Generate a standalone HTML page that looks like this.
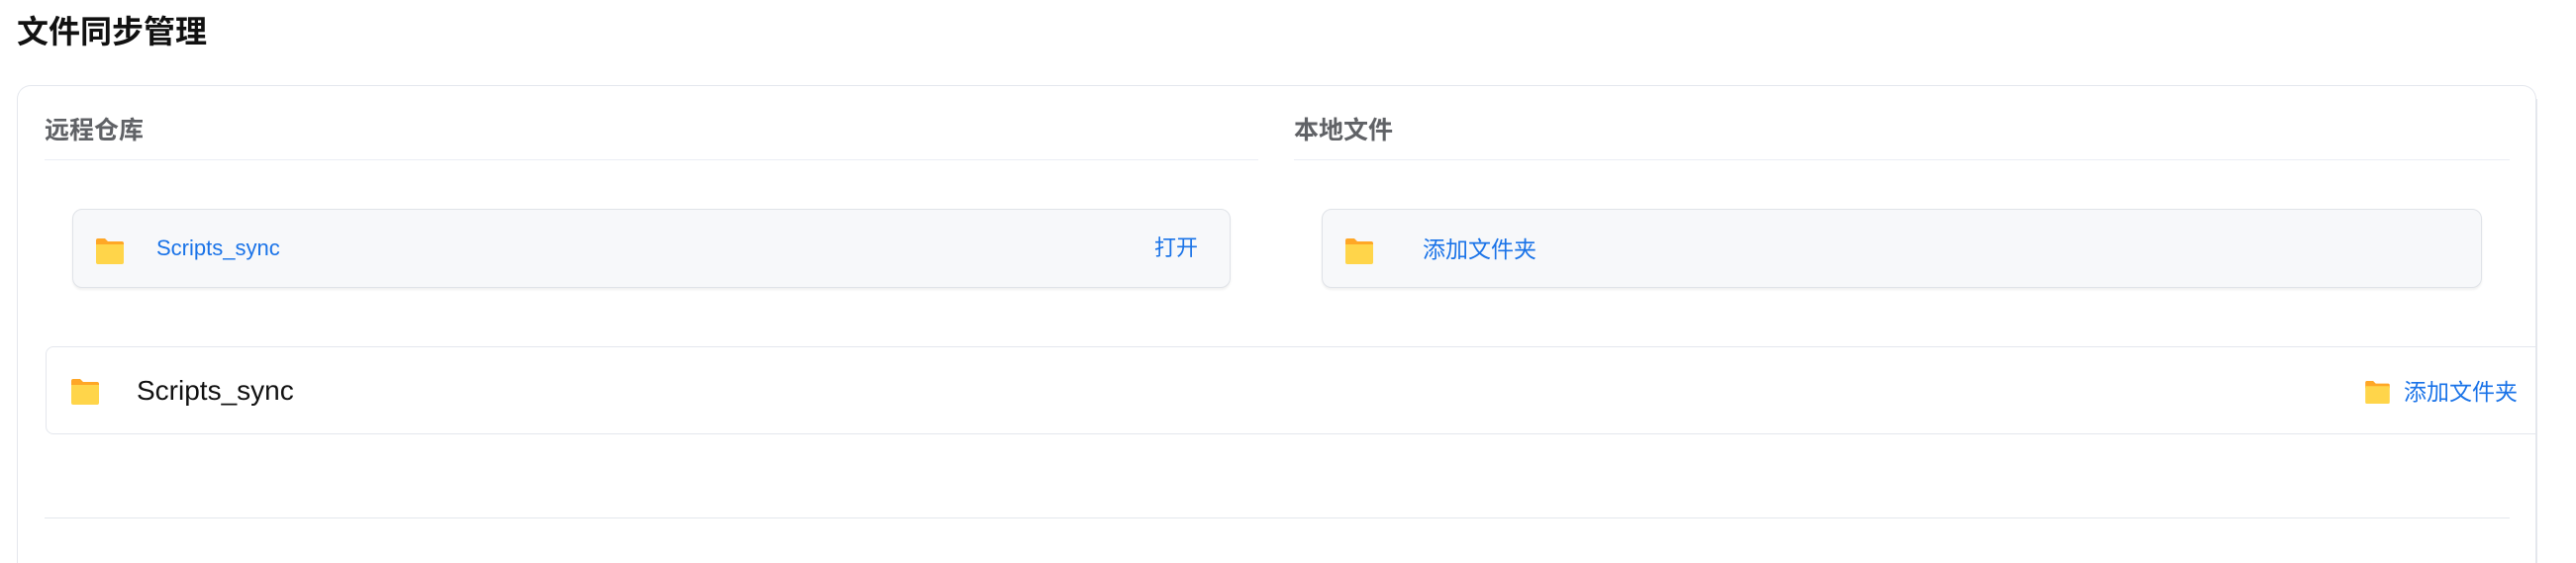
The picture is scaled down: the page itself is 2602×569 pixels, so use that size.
<!DOCTYPE html>
<html><head><meta charset="utf-8"><style>
html,body{margin:0;width:2602px;height:569px;overflow:hidden}
body{background:#fff;font-family:"Liberation Sans","Noto Sans CJK SC",sans-serif;position:relative}
.a{position:absolute}
.t{left:17px;top:12px;font-size:32px;font-weight:bold;color:#111;line-height:40px}
.card{left:17px;top:86px;width:2545px;height:500px;border:1.5px solid #e4e7ed;border-bottom:none;border-radius:14px 14px 0 0;box-sizing:border-box}
.h{font-size:25px;font-weight:bold;color:#606266;line-height:30px;top:117px}
.div{height:1px;background:#ebeef5}
.box{top:211px;height:80px;background:#f7f8fa;border:1.5px solid #e0e3e8;border-radius:10px;box-sizing:border-box;box-shadow:0 2px 2px rgba(0,0,0,.06)}
.blue{color:#1a73e8}
.fi{width:28px;height:26px}
</style></head><body>
<div class="a t">文件同步管理</div>
<div class="a card"></div>
<div class="a h" style="left:45px">远程仓库</div>
<div class="a div" style="left:45px;top:161px;width:1226px"></div>
<div class="a h" style="left:1307px">本地文件</div>
<div class="a div" style="left:1307px;top:161px;width:1228px"></div>

<svg width="0" height="0" style="position:absolute"><defs><symbol id="f" viewBox="0 0 28 26"><path d="M0 2a2 2 0 0 1 2-2h7l3 3h14a2 2 0 0 1 2 2v3H0z" fill="#ffa726"/><path d="M0 6h28v18a2 2 0 0 1-2 2H2a2 2 0 0 1-2-2z" fill="#ffd54a"/></symbol></defs></svg>

<div class="a box" style="left:73px;width:1170px"></div>
<svg class="a fi" style="left:97px;top:241px"><use href="#f"/></svg>
<div class="a blue" style="left:158px;top:238px;font-size:22px;line-height:26px">Scripts_sync</div>
<div class="a blue" style="left:1166px;top:238px;font-size:22px;line-height:26px">打开</div>

<div class="a box" style="left:1335px;width:1172px"></div>
<svg class="a fi" style="left:1359px;top:241px"><use href="#f"/></svg>
<div class="a blue" style="left:1437px;top:238px;font-size:23px;line-height:28px">添加文件夹</div>

<div class="a" style="left:46px;top:350px;width:2540px;height:89px;border:1.5px solid #e4e7ed;border-radius:8px;box-sizing:border-box;background:#fff"></div>
<svg class="a fi" style="left:72px;top:383px"><use href="#f"/></svg>
<div class="a" style="left:138px;top:379px;font-size:28px;line-height:32px;color:#111">Scripts_sync</div>
<svg class="a" style="left:2389px;top:385px;width:25px;height:23px" viewBox="0 0 28 26"><use href="#f"/></svg>
<div class="a blue" style="left:2428px;top:382px;font-size:23px;line-height:28px">添加文件夹</div>
<div class="a" style="left:2562px;top:86px;width:40px;height:483px;background:#fff"></div>
<div class="a" style="left:2561px;top:100px;width:1.5px;height:469px;background:#e4e7ed"></div>

<div class="a div" style="left:45px;top:523px;width:2490px;background:#e4e7ed"></div>
</body></html>
